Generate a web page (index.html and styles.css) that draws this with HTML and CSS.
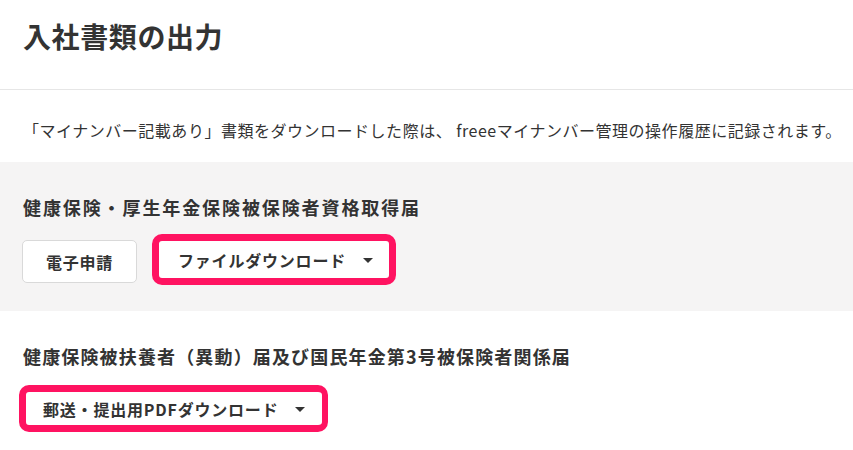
FILE: index.html
```html
<!DOCTYPE html>
<html lang="ja">
<head>
<meta charset="utf-8">
<link rel="stylesheet" href="styles.css">
</head>
<body>
<header class="page-header">
  <h1 class="title">入社書類の出力</h1>
</header>
<p class="note">「マイナンバー記載あり」書類をダウンロードした際は、 freeeマイナンバー管理の操作履歴に記録されます。</p>
<section class="doc doc-grey">
  <h2 class="doc-title doc-title-1">健康保険・厚生年金保険被保険者資格取得届</h2>
  <div class="actions">
    <button class="btn btn-plain">電子申請</button>
    <button class="btn btn-hl btn-hl-1"><span>ファイルダウンロード</span><i class="caret"></i></button>
  </div>
</section>
<section class="doc">
  <h2 class="doc-title">健康保険被扶養者（異動）届及び国民年金第3号被保険者関係届</h2>
  <div class="actions actions-2">
    <button class="btn btn-hl btn-hl-2"><span>郵送・提出用PDFダウンロード</span><i class="caret"></i></button>
  </div>
</section>
</body>
</html>
```

FILE: styles.css
```css
* { box-sizing: border-box; }
html, body { margin: 0; padding: 0; background: #fff; }
body {
  font-family: "Noto Sans CJK JP", "Noto Sans", sans-serif;
  color: #333;
  overflow: hidden;
}
.page-header {
  height: 90px;
  border-bottom: 1px solid #e6e6e6;
  padding: 16px 23px 0;
}
.title {
  margin: 0;
  font-size: 28px;
  line-height: 40px;
  font-weight: 700;
  letter-spacing: 0.6px;
  color: #333;
}
.note {
  margin: 0;
  height: 72px;
  padding: 28px 23px 0;
  font-size: 16px;
  line-height: 24px;
  letter-spacing: 0.52px;
  white-space: nowrap;
}
.doc {
  padding: 32px 23px 0;
}
.doc-grey {
  background: #f5f4f4;
  height: 149px;
}
.doc-title {
  margin: 0;
  font-size: 18px;
  line-height: 26px;
  font-weight: 700;
  letter-spacing: 1.15px;
  white-space: nowrap;
}
.doc-title-1 {
  letter-spacing: 1.9px;
}
.actions {
  display: flex;
  align-items: flex-start;
  gap: 15px;
  margin-top: 14px;
  margin-left: -1px;
}
.actions-2 {
  margin-top: 16px;
  margin-left: -4px;
}
.btn {
  font-family: inherit;
  font-size: 16px;
  font-weight: 700;
  color: #333;
  background: #fff;
  display: flex;
  align-items: center;
  cursor: pointer;
  letter-spacing: 0.8px;
}
.btn-plain {
  width: 115px;
  height: 43px;
  margin-top: 6px;
  justify-content: center;
  border: 1px solid #d9d9d9;
  border-radius: 5px;
}
.btn-hl {
  border: 7px solid #ff1361;
  border-radius: 10px;
  justify-content: space-between;
}
.btn-hl-1 {
  width: 244px;
  height: 51px;
  padding: 0 16px 0 19px;
}
.btn-hl-2 {
  width: 309px;
  height: 47px;
  border-width: 7px 6px 7px 7px;
  padding: 0 17px 0 17px;
}
.caret {
  display: block;
  width: 0;
  height: 0;
  border-left: 5px solid transparent;
  border-right: 5px solid transparent;
  border-top: 5px solid #333;
  margin-top: 2px;
}
```
